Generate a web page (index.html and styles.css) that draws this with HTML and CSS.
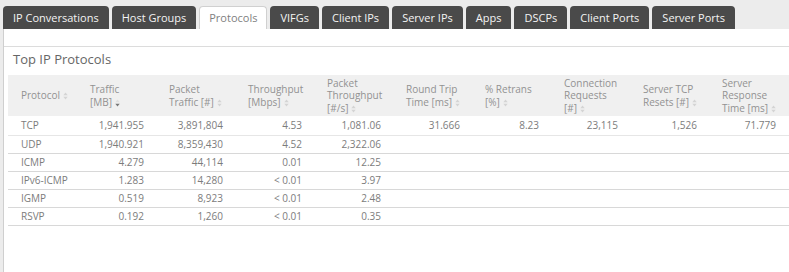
FILE: index.html
```html
<!DOCTYPE html>
<html>
<head>
<meta charset="utf-8">
<link rel="stylesheet" href="styles.css">
</head>
<body>
<div class="tabs">
  <div class="tab">IP Conversations</div>
  <div class="tab">Host Groups</div>
  <div class="tab active">Protocols</div>
  <div class="tab">VIFGs</div>
  <div class="tab">Client IPs</div>
  <div class="tab">Server IPs</div>
  <div class="tab">Apps</div>
  <div class="tab">DSCPs</div>
  <div class="tab">Client Ports</div>
  <div class="tab">Server Ports</div>
</div>
<div class="panel">
  <div class="toolbar"></div>
  <div class="card">
    <div class="title">Top IP Protocols</div>
    <table class="grid">
      <colgroup>
        <col class="c-first"><col class="c"><col class="c"><col class="c"><col class="c"><col class="c"><col class="c"><col class="c"><col class="c"><col class="c">
      </colgroup>
      <thead>
        <tr>
          <th class="first">Protocol<span class="sort"><svg width="5" height="8" viewBox="0 0 5 8"><path d="M0.3 3.3 L2.5 0.6 L4.7 3.3Z" fill="#d4d4d4"/><path d="M0.3 4.7 L2.5 7.4 L4.7 4.7Z" fill="#d4d4d4"/></svg></span></th>
          <th>Traffic<br>[MB]<span class="sort"><svg width="5" height="8" viewBox="0 0 5 8"><path d="M0.3 3.3 L2.5 0.6 L4.7 3.3Z" fill="#e0e0e0"/><path d="M0.3 4.7 L2.5 7.4 L4.7 4.7Z" fill="#777"/></svg></span></th>
          <th>Packet<br>Traffic [#]<span class="sort"><svg width="5" height="8" viewBox="0 0 5 8"><path d="M0.3 3.3 L2.5 0.6 L4.7 3.3Z" fill="#d4d4d4"/><path d="M0.3 4.7 L2.5 7.4 L4.7 4.7Z" fill="#d4d4d4"/></svg></span></th>
          <th>Throughput<br>[Mbps]<span class="sort"><svg width="5" height="8" viewBox="0 0 5 8"><path d="M0.3 3.3 L2.5 0.6 L4.7 3.3Z" fill="#d4d4d4"/><path d="M0.3 4.7 L2.5 7.4 L4.7 4.7Z" fill="#d4d4d4"/></svg></span></th>
          <th>Packet<br>Throughput<br>[#/s]<span class="sort"><svg width="5" height="8" viewBox="0 0 5 8"><path d="M0.3 3.3 L2.5 0.6 L4.7 3.3Z" fill="#d4d4d4"/><path d="M0.3 4.7 L2.5 7.4 L4.7 4.7Z" fill="#d4d4d4"/></svg></span></th>
          <th>Round Trip<br>Time [ms]<span class="sort"><svg width="5" height="8" viewBox="0 0 5 8"><path d="M0.3 3.3 L2.5 0.6 L4.7 3.3Z" fill="#d4d4d4"/><path d="M0.3 4.7 L2.5 7.4 L4.7 4.7Z" fill="#d4d4d4"/></svg></span></th>
          <th>% Retrans<br>[%]<span class="sort"><svg width="5" height="8" viewBox="0 0 5 8"><path d="M0.3 3.3 L2.5 0.6 L4.7 3.3Z" fill="#d4d4d4"/><path d="M0.3 4.7 L2.5 7.4 L4.7 4.7Z" fill="#d4d4d4"/></svg></span></th>
          <th>Connection<br>Requests<br>[#]<span class="sort"><svg width="5" height="8" viewBox="0 0 5 8"><path d="M0.3 3.3 L2.5 0.6 L4.7 3.3Z" fill="#d4d4d4"/><path d="M0.3 4.7 L2.5 7.4 L4.7 4.7Z" fill="#d4d4d4"/></svg></span></th>
          <th>Server TCP<br>Resets [#]<span class="sort"><svg width="5" height="8" viewBox="0 0 5 8"><path d="M0.3 3.3 L2.5 0.6 L4.7 3.3Z" fill="#d4d4d4"/><path d="M0.3 4.7 L2.5 7.4 L4.7 4.7Z" fill="#d4d4d4"/></svg></span></th>
          <th>Server<br>Response<br>Time [ms]<span class="sort"><svg width="5" height="8" viewBox="0 0 5 8"><path d="M0.3 3.3 L2.5 0.6 L4.7 3.3Z" fill="#d4d4d4"/><path d="M0.3 4.7 L2.5 7.4 L4.7 4.7Z" fill="#d4d4d4"/></svg></span></th>
        </tr>
      </thead>
      <tbody>
        <tr class="tall"><td class="first">TCP</td><td>1,941.955</td><td>3,891,804</td><td>4.53</td><td>1,081.06</td><td>31.666</td><td>8.23</td><td>23,115</td><td>1,526</td><td>71.779</td></tr>
        <tr><td class="first">UDP</td><td>1,940.921</td><td>8,359,430</td><td>4.52</td><td>2,322.06</td><td></td><td></td><td></td><td></td><td></td></tr>
        <tr><td class="first">ICMP</td><td>4.279</td><td>44,114</td><td>0.01</td><td>12.25</td><td></td><td></td><td></td><td></td><td></td></tr>
        <tr><td class="first">IPv6-ICMP</td><td>1.283</td><td>14,280</td><td>&lt; 0.01</td><td>3.97</td><td></td><td></td><td></td><td></td><td></td></tr>
        <tr><td class="first">IGMP</td><td>0.519</td><td>8,923</td><td>&lt; 0.01</td><td>2.48</td><td></td><td></td><td></td><td></td><td></td></tr>
        <tr><td class="first">RSVP</td><td>0.192</td><td>1,260</td><td>&lt; 0.01</td><td>0.35</td><td></td><td></td><td></td><td></td><td></td></tr>
      </tbody>
    </table>
  </div>
</div>
</body>
</html>
```
FILE: styles.css
```css
html, body {
  margin: 0;
  padding: 0;
}
body {
  background: #ececec;
  font-family: "Open Sans", "Noto Sans", sans-serif;
  width: 789px;
  height: 272px;
  overflow: hidden;
}
.tabs {
  display: flex;
  gap: 3px;
  padding: 6px 0 0 3px;
  height: 23px;
}
.tab {
  height: 23px;
  line-height: 23px;
  padding: 0 10px;
  background: #4a4a4a;
  color: #f4f4f4;
  font-size: 11px;
  border-radius: 4px 4px 0 0;
  box-sizing: border-box;
  white-space: nowrap;
}
.tab.active {
  background: #fff;
  color: #7f7f7f;
  border: 1px solid #d0d0d0;
  border-bottom: none;
  line-height: 22px;
  padding: 0 9px;
}
.panel {
  margin-left: 3px;
  background: #fff;
  border-left: 1px solid #cfcfcf;
  height: 243px;
  width: 786px;
  overflow: hidden;
}
.toolbar {
  height: 17px;
}
.card {
  border-top: 1px solid #dcdcdc;
}
.title {
  font-size: 13px;
  line-height: 18px;
  color: #666;
  padding: 3px 0 7px 9px;
}
.grid {
  border-collapse: collapse;
  table-layout: fixed;
  width: 785px;
  margin-left: 4px;
  font-size: 10px;
}
.c-first { width: 74px; }
.c { width: 79px; }
.grid th {
  background: #f0f0f0;
  color: #929292;
  font-weight: normal;
  text-align: left;
  vertical-align: middle;
  height: 41px;
  padding: 0 0 0 8px;
  line-height: 12.5px;
}
.grid th.first {
  padding-left: 13px;
}
.sort {
  display: inline-block;
  margin-left: 3px;
  vertical-align: -1px;
}
.sort svg {
  display: block;
}
.grid td {
  color: #7c7c7c;
  text-align: right;
  padding: 0 17px 0 0;
  height: 17px;
  line-height: 17px;
  border-bottom: 1px solid #d8d8d8;
  white-space: nowrap;
}
.grid tr.tall td {
  height: 19px;
  border-bottom-color: #e6e6e6;
}
.grid td.first {
  text-align: left;
  padding: 0 0 0 13px;
}
```
